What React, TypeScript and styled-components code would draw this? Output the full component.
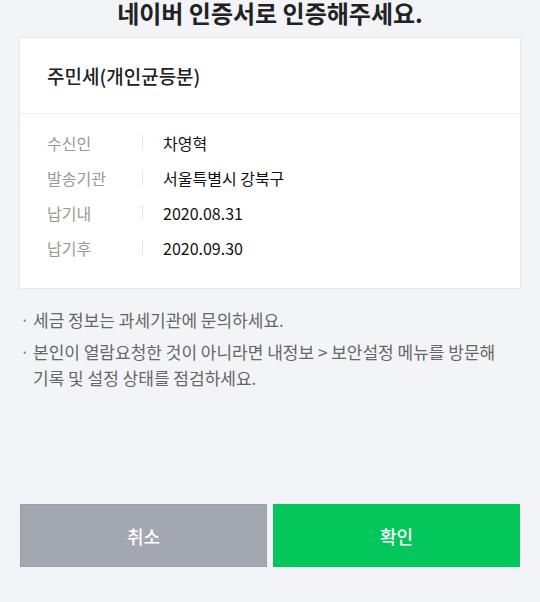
import React from "react";
import styled, { createGlobalStyle } from "styled-components";

const GlobalStyle = createGlobalStyle`
  html, body {
    margin: 0;
    padding: 0;
    background: #f3f4f8;
    font-family: "Noto Sans CJK KR", "Noto Sans", sans-serif;
    color: #222;
  }
`;

const StyledPage = styled.div`
  display: flex;
  flex-direction: column;
  height: 602px;
  overflow: hidden;
`;

const StyledTitle = styled.h1`
  margin: 0;
  padding-top: 1px;
  height: 36px;
  font-size: 24px;
  line-height: 24px;
  font-weight: 700;
  text-align: center;
  color: #222;
`;

const StyledCard = styled.section`
  margin: 0 19px;
  background: #fff;
  border: 1px solid #e4e6ea;
`;

const StyledCardHead = styled.div`
  display: flex;
  align-items: center;
  height: 75px;
  padding: 0 27px;
  border-bottom: 1px solid #eff0f3;
  font-size: 19px;
  font-weight: 500;
  color: #222;
`;

const StyledCardBody = styled.dl`
  margin: 0;
  padding: 11px 27px 23px;
`;

const StyledRow = styled.div`
  display: flex;
  align-items: center;
  height: 35px;
  font-size: 16px;
`;

const StyledLabel = styled.dt`
  width: 95px;
  color: #999;
`;

const StyledDivider = styled.span`
  width: 1px;
  height: 15px;
  margin-right: 20px;
  background: #e6e6e6;
`;

const StyledValue = styled.dd`
  margin: 0;
  color: #111;
`;

const StyledNotes = styled.ul`
  list-style: none;
  margin: 18px 0 0;
  padding: 0 20px;
  display: flex;
  flex-direction: column;
  gap: 6px;
`;

const StyledNote = styled.li`
  position: relative;
  padding-left: 13px;
  font-size: 17px;
  line-height: 26px;
  word-break: keep-all;
  color: #666;

  &::before {
    content: "·";
    position: absolute;
    left: 0;
    top: 0;
    color: #888;
  }
`;

const StyledButtons = styled.div`
  display: flex;
  gap: 6px;
  margin: auto 20px 35px;
`;

const StyledButton = styled.button<{ $primary?: boolean }>`
  flex: 1;
  height: 63px;
  border: 1px solid ${({ $primary }) => ($primary ? "#03c75a" : "#9a9eab")};
  background: ${({ $primary }) => ($primary ? "#03c75a" : "#a3a7b2")};
  color: #fff;
  font-family: inherit;
  font-size: 18px;
  font-weight: 500;
  cursor: pointer;
`;

const rows = [
  { label: "수신인", value: "차영혁" },
  { label: "발송기관", value: "서울특별시 강북구" },
  { label: "납기내", value: "2020.08.31" },
  { label: "납기후", value: "2020.09.30" },
];

const notes = [
  "세금 정보는 과세기관에 문의하세요.",
  "본인이 열람요청한 것이 아니라면 내정보 > 보안설정 메뉴를 방문해 기록 및 설정 상태를 점검하세요.",
];

export default function App() {
  return (
    <StyledPage>
      <GlobalStyle />
      <StyledTitle>네이버 인증서로 인증해주세요.</StyledTitle>
      <StyledCard>
        <StyledCardHead>주민세(개인균등분)</StyledCardHead>
        <StyledCardBody>
          {rows.map((r) => (
            <StyledRow key={r.label}>
              <StyledLabel>{r.label}</StyledLabel>
              <StyledDivider />
              <StyledValue>{r.value}</StyledValue>
            </StyledRow>
          ))}
        </StyledCardBody>
      </StyledCard>
      <StyledNotes>
        {notes.map((n) => (
          <StyledNote key={n}>{n}</StyledNote>
        ))}
      </StyledNotes>
      <StyledButtons>
        <StyledButton>취소</StyledButton>
        <StyledButton $primary>확인</StyledButton>
      </StyledButtons>
    </StyledPage>
  );
}
